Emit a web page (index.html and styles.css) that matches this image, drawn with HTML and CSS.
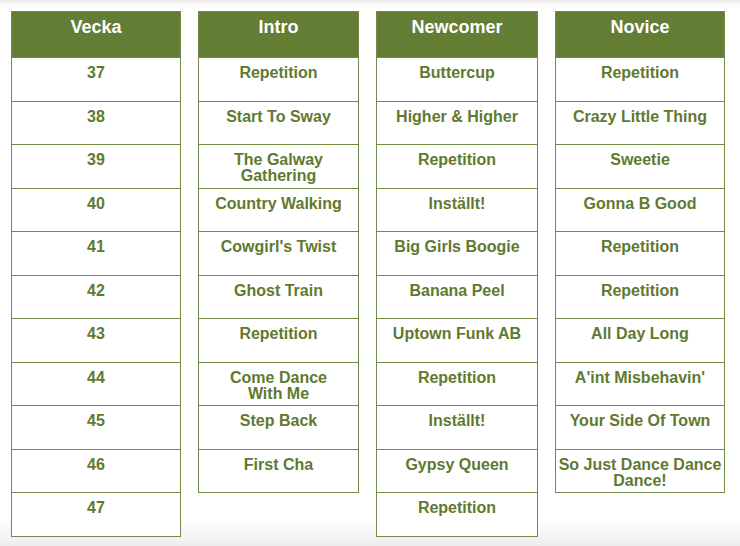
FILE: index.html
```html
<!DOCTYPE html>
<html lang="sv">
<head>
<meta charset="utf-8">
<title>Schema</title>
<link rel="stylesheet" href="styles.css">
</head>
<body>
<div class="page">
  <div class="columns">
    <div class="col wide">
      <div class="head">Vecka</div>
      <div class="cell">37</div>
      <div class="cell">38</div>
      <div class="cell">39</div>
      <div class="cell">40</div>
      <div class="cell">41</div>
      <div class="cell">42</div>
      <div class="cell">43</div>
      <div class="cell">44</div>
      <div class="cell">45</div>
      <div class="cell">46</div>
      <div class="cell">47</div>
    </div>
    <div class="col">
      <div class="head">Intro</div>
      <div class="cell">Repetition</div>
      <div class="cell">Start To Sway</div>
      <div class="cell">The Galway Gathering</div>
      <div class="cell">Country Walking</div>
      <div class="cell">Cowgirl's Twist</div>
      <div class="cell">Ghost Train</div>
      <div class="cell">Repetition</div>
      <div class="cell">Come Dance<br>With Me</div>
      <div class="cell">Step Back</div>
      <div class="cell">First Cha</div>
    </div>
    <div class="col mid">
      <div class="head">Newcomer</div>
      <div class="cell">Buttercup</div>
      <div class="cell">Higher &amp; Higher</div>
      <div class="cell">Repetition</div>
      <div class="cell">Inställt!</div>
      <div class="cell">Big Girls Boogie</div>
      <div class="cell">Banana Peel</div>
      <div class="cell">Uptown Funk AB</div>
      <div class="cell">Repetition</div>
      <div class="cell">Inställt!</div>
      <div class="cell">Gypsy Queen</div>
      <div class="cell">Repetition</div>
    </div>
    <div class="col wide">
      <div class="head">Novice</div>
      <div class="cell">Repetition</div>
      <div class="cell">Crazy Little Thing</div>
      <div class="cell">Sweetie</div>
      <div class="cell">Gonna B Good</div>
      <div class="cell">Repetition</div>
      <div class="cell">Repetition</div>
      <div class="cell">All Day Long</div>
      <div class="cell">A'int Misbehavin'</div>
      <div class="cell">Your Side Of Town</div>
      <div class="cell">So Just Dance Dance Dance!</div>
    </div>
  </div>
</div>
</body>
</html>
```

FILE: styles.css
```css
html, body {
  margin: 0;
  padding: 0;
}
body {
  width: 740px;
  height: 546px;
  overflow: hidden;
  background: linear-gradient(to bottom, #e9e9e9 0px, #fbfbfb 4px, #ffffff 8px, #ffffff 520px, #f4f4f4 536px, #ececec 546px);
  font-family: "Liberation Sans", Arial, sans-serif;
}
.page {
  padding: 11px 0 0 11px;
}
.columns {
  display: flex;
  align-items: flex-start;
  gap: 17px;
}
.col {
  width: 161px;
  border: 1px solid #6f8b44;
  background: #ffffff;
  box-sizing: border-box;
}
.col.mid {
  width: 162px;
}
.col.wide {
  width: 170px;
}
.head {
  height: 45px;
  box-sizing: border-box;
  background: #647d35;
  color: #ffffff;
  font-weight: bold;
  font-size: 18px;
  line-height: 20px;
  text-align: center;
  padding-top: 5px;
}
.cell {
  height: 43.5px;
  box-sizing: border-box;
  border-top: 1px solid #6f8b44;
  color: #5f7a30;
  font-weight: bold;
  font-size: 16px;
  line-height: 16px;
  text-align: center;
  padding: 7px 0 0;
}
```
